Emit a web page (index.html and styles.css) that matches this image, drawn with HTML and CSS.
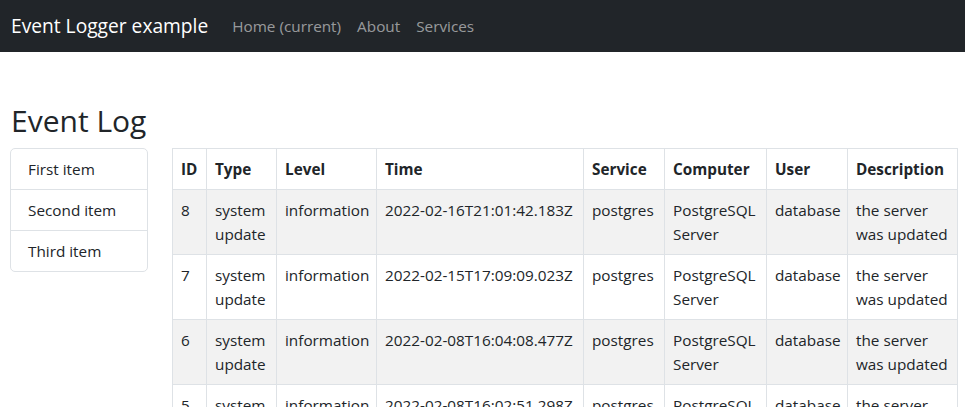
FILE: index.html
```html
<!DOCTYPE html>
<html lang="en">
<head>
<meta charset="utf-8">
<title>Event Logger example</title>
<link rel="stylesheet" href="styles.css">
</head>
<body>
<nav class="navbar">
  <a class="brand" href="#">Event Logger example</a>
  <ul class="nav">
    <li><a class="nav-link" href="#">Home (current)</a></li>
    <li><a class="nav-link" href="#">About</a></li>
    <li><a class="nav-link" href="#">Services</a></li>
  </ul>
</nav>
<main class="page">
  <h1 class="title">Event Log</h1>
  <div class="layout">
    <ul class="list-group">
      <li class="list-item">First item</li>
      <li class="list-item">Second item</li>
      <li class="list-item">Third item</li>
    </ul>
    <table class="log">
      <colgroup>
        <col class="c-id"><col class="c-type"><col class="c-level"><col class="c-time"><col class="c-service"><col class="c-computer"><col class="c-user"><col class="c-desc">
      </colgroup>
      <thead>
        <tr><th>ID</th><th>Type</th><th>Level</th><th>Time</th><th>Service</th><th>Computer</th><th>User</th><th>Description</th></tr>
      </thead>
      <tbody>
        <tr><td>8</td><td>system update</td><td>information</td><td>2022-02-16T21:01:42.183Z</td><td>postgres</td><td>PostgreSQL Server</td><td>database</td><td>the server was updated</td></tr>
        <tr><td>7</td><td>system update</td><td>information</td><td>2022-02-15T17:09:09.023Z</td><td>postgres</td><td>PostgreSQL Server</td><td>database</td><td>the server was updated</td></tr>
        <tr><td>6</td><td>system update</td><td>information</td><td>2022-02-08T16:04:08.477Z</td><td>postgres</td><td>PostgreSQL Server</td><td>database</td><td>the server was updated</td></tr>
        <tr><td>5</td><td>system update</td><td>information</td><td>2022-02-08T16:02:51.298Z</td><td>postgres</td><td>PostgreSQL Server</td><td>database</td><td>the server was updated</td></tr>
        <tr><td>4</td><td>system update</td><td>information</td><td>2022-02-08T15:58:12.104Z</td><td>postgres</td><td>PostgreSQL Server</td><td>database</td><td>the server was updated</td></tr>
      </tbody>
    </table>
  </div>
</main>
</body>
</html>
```
FILE: styles.css
```css
html { overflow: hidden; }
* { box-sizing: border-box; }
body {
  margin: 0;
  font-family: "Open Sans", "Noto Sans", sans-serif;
  font-size: 15.3px;
  line-height: 24px;
  color: #212529;
  background: #fff;
}
.navbar {
  height: 52px;
  background: #212529;
  display: flex;
  align-items: center;
  padding: 0 11px;
}
.brand {
  color: #fff;
  text-decoration: none;
  font-size: 19.2px;
  line-height: 30px;
  margin-right: 16px;
}
.nav {
  list-style: none;
  margin: 0;
  padding: 0;
  display: flex;
}
.nav-link {
  display: block;
  padding: 8px;
  color: rgba(255,255,255,.55);
  text-decoration: none;
}
.page {
  padding: 0 8px 0 10px;
}
.title {
  margin: 51px 0 9px 1px;
  font-size: 30px;
  font-weight: 400;
  line-height: 36px;
}
.layout {
  display: grid;
  grid-template-columns: 138px 785px;
  column-gap: 24px;
  align-items: start;
}
.list-group {
  list-style: none;
  margin: 0;
  padding: 0;
  border: 1px solid #dee2e6;
  border-radius: 5px;
}
.list-item {
  padding: 8px 17px;
  border-bottom: 1px solid #dee2e6;
}
.list-item:last-child { border-bottom: 0; }
.log {
  border-collapse: collapse;
  table-layout: fixed;
  width: 785px;
}
.c-id { width: 34px; }
.c-type { width: 70px; }
.c-level { width: 100px; }
.c-time { width: 207px; }
.c-service { width: 81px; }
.c-computer { width: 102px; }
.c-user { width: 81px; }
.c-desc { width: 110px; }
.log th, .log td {
  border: 1px solid #dee2e6;
  padding: 8px;
  text-align: left;
  vertical-align: top;
}
.log th { font-weight: 700; }
.log tbody tr:nth-child(odd) td { background: #f2f2f2; }
```
